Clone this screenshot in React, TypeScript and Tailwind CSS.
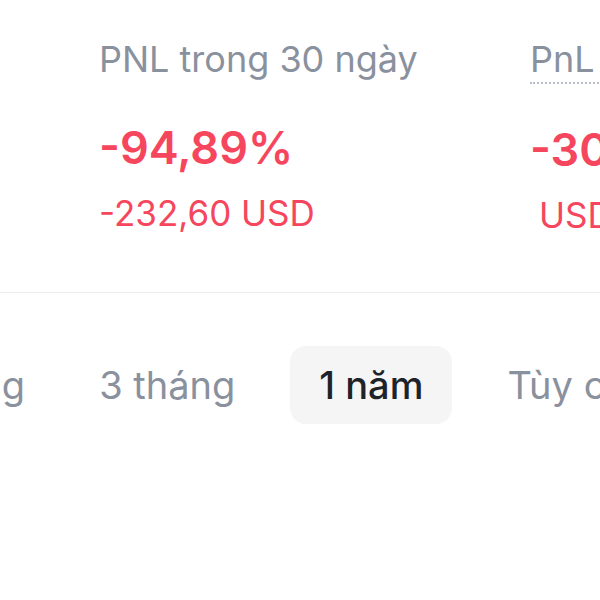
import React from "react";

const stats = [
  { label: "PNL trong 30 ngày", pct: "-94,89%", usd: "-232,60 USD", dotted: false },
  { label: "PnL tích lũy", pct: "-30,12%", usd: "USD", dotted: true },
];

const tabs = ["1 tháng", "3 tháng", "1 năm", "Tùy chỉnh"];

export default function App() {
  return (
    <div
      className="w-[600px] h-[600px] overflow-hidden bg-white"
      style={{ fontFamily: "Inter, 'Noto Sans', sans-serif" }}
    >
      <div className="flex pl-[99px] pt-[36px] h-[292px]">
        {stats.map((s) => (
          <div key={s.label} className="flex flex-col shrink-0 w-[431px]">
            <span
              className={
                "text-[36px] leading-[46px] text-[#8a919e] w-fit whitespace-nowrap " +
                (s.dotted ? "border-b-2 border-dotted border-[#b7bdc6]" : "")
              }
            >
              {s.label}
            </span>
            <span className="mt-[41px] text-[45px] leading-[50px] font-semibold text-[#f6465d]">
              {s.pct}
            </span>
            <span
              className={
                "mt-[20px] text-[35px] leading-[40px] text-[#f6465d] " +
                (s.dotted ? "pl-[9px]" : "")
              }
            >
              {s.usd}
            </span>
          </div>
        ))}
      </div>
      <div className="h-px bg-[#eaecef]" />
      <div className="flex gap-[26px] ml-[-132px] mt-[53px]">
        {tabs.map((t, i) => (
          <div
            key={t}
            className={
              "shrink-0 h-[78px] px-[29px] flex items-center rounded-[16px] text-[38px] " +
              (t === "1 năm" ? "bg-[#f5f5f5] text-[#1e2329] font-medium" : "text-[#8a919e]") +
              (i === 0 ? " pr-[19px]" : "")
            }
          >
            {t}
          </div>
        ))}
      </div>
    </div>
  );
}
